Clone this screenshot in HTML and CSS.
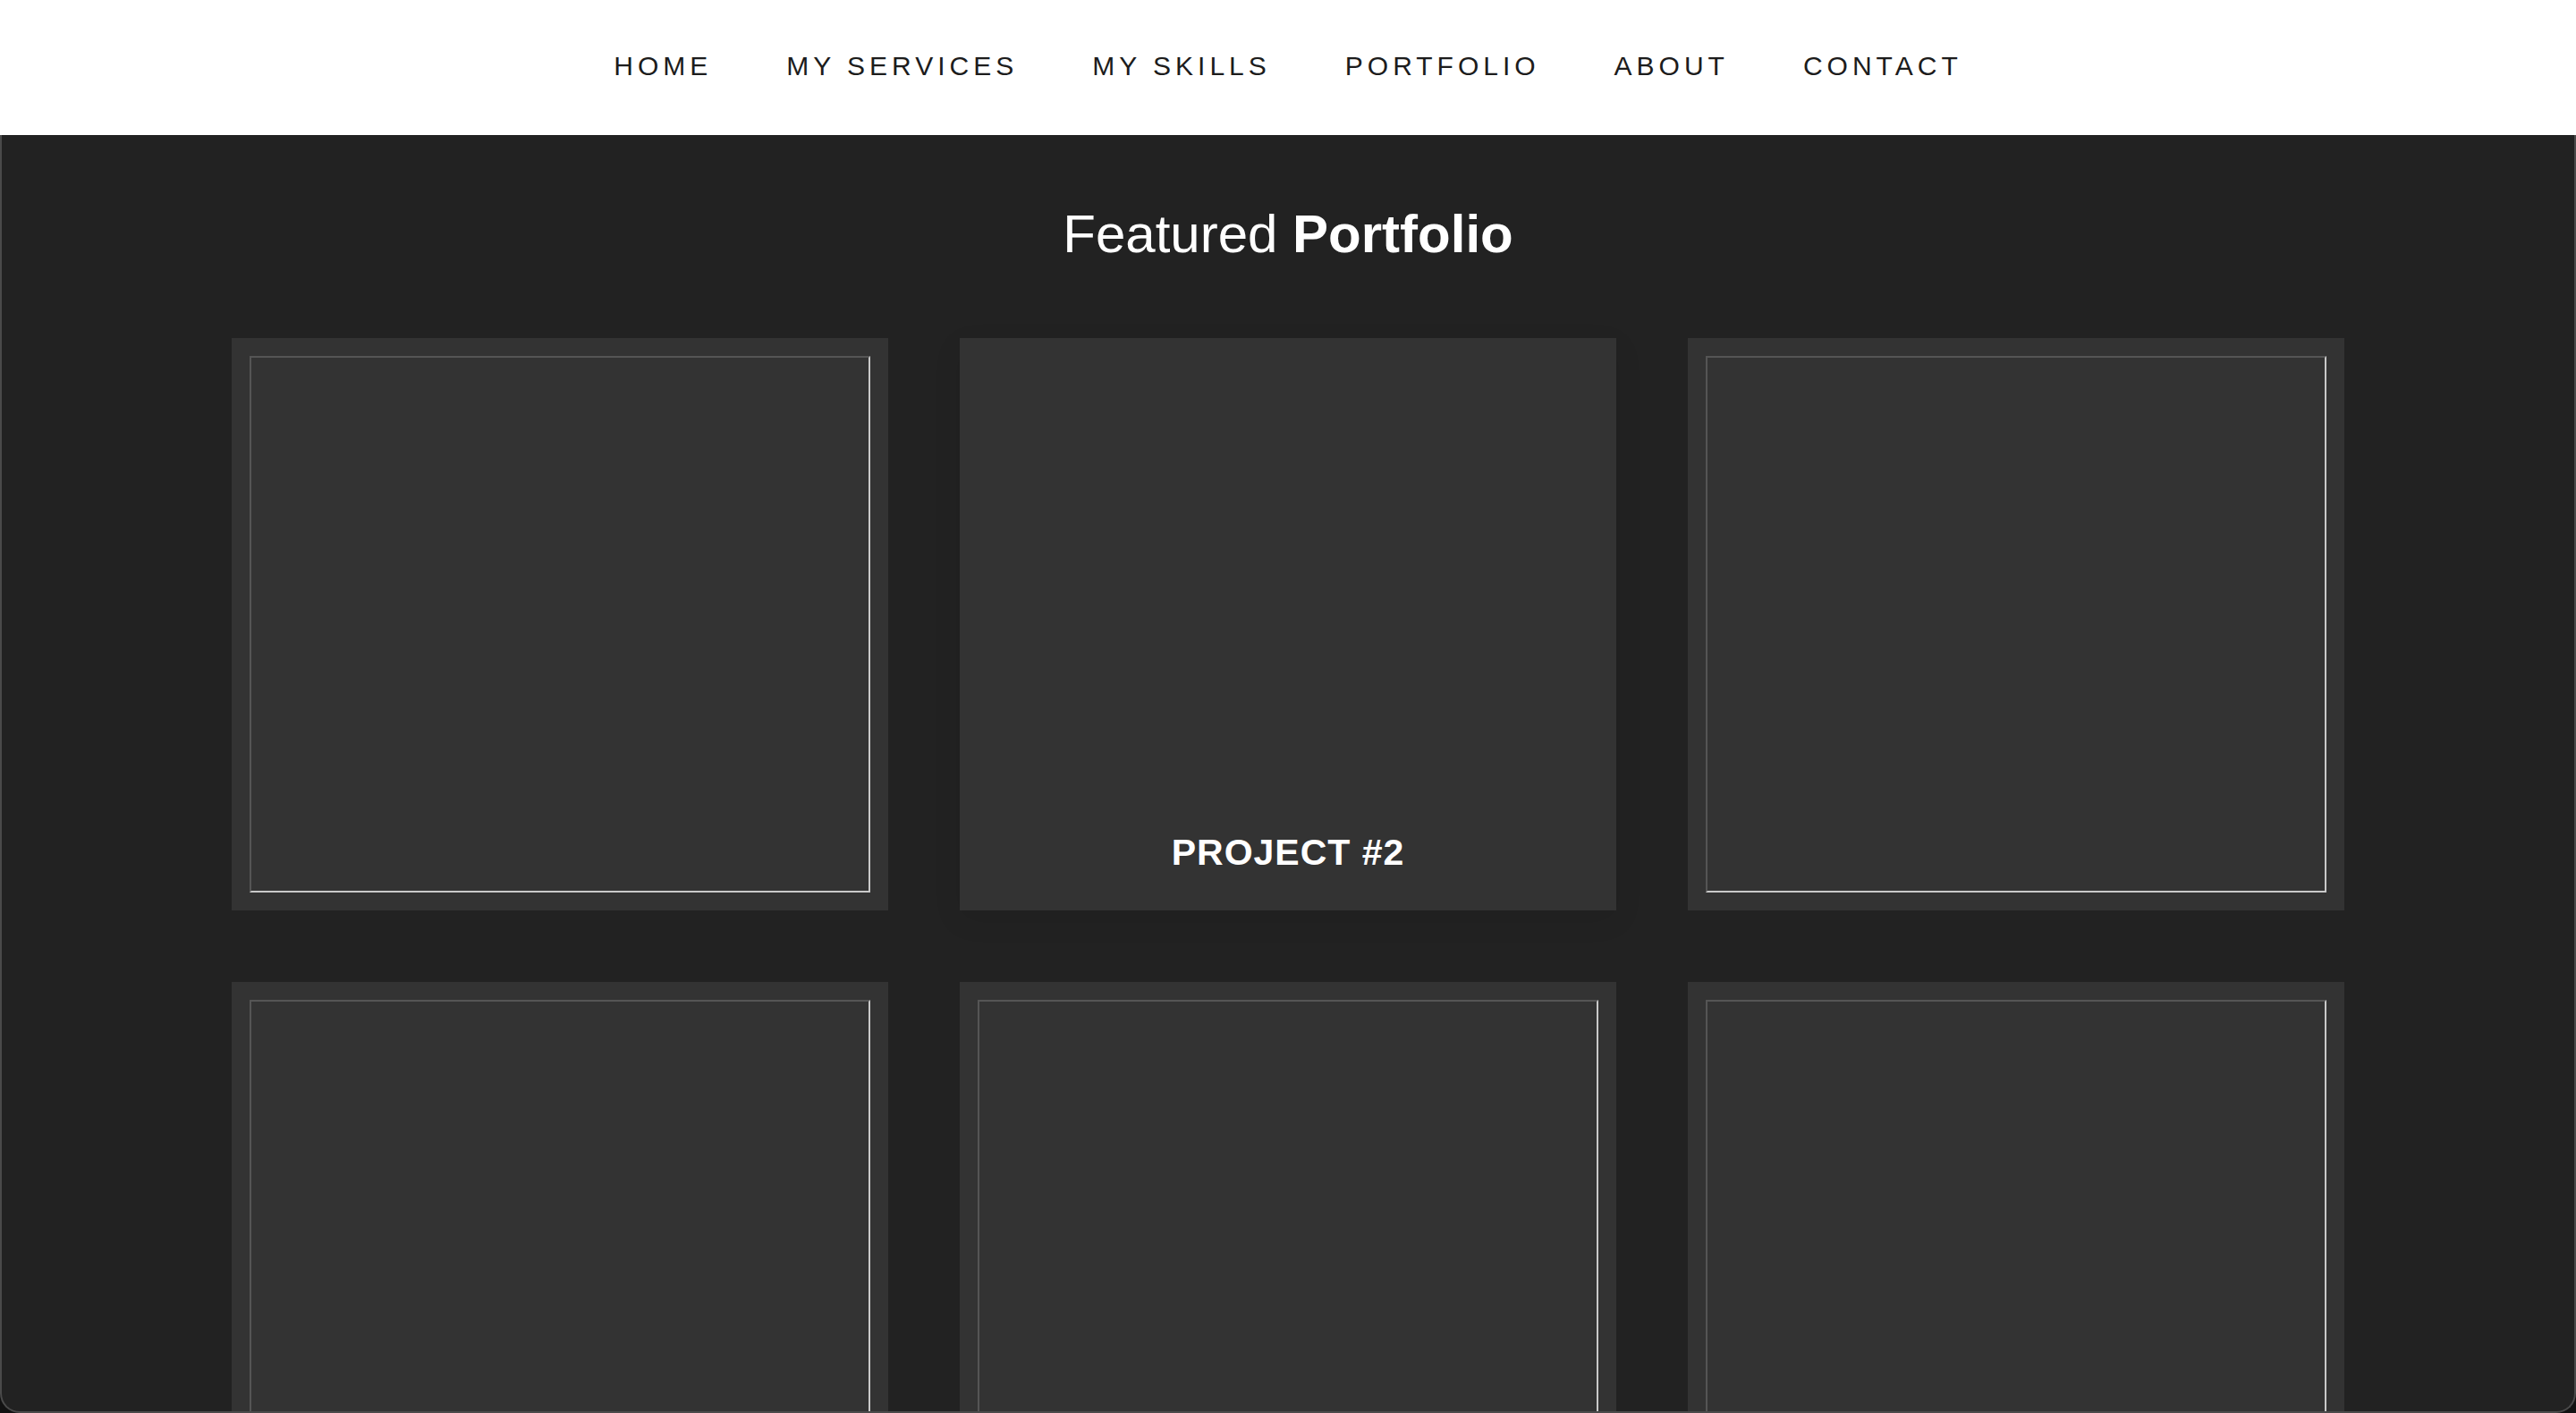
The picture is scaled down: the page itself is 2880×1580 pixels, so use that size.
FILE: index.html
```html
<!DOCTYPE html>
<html lang="en">
  <head>
    <meta charset="UTF-8" />
    <meta name="viewport" content="width=device-width, initial-scale=1.0" />
    <title>Portfolio</title>
    <link rel="stylesheet" href="styles.css">
  </head>
  <body>
    <header id="topbar">
      <nav id="menu">
        <a href="#">HOME</a>
        <a href="#">MY SERVICES</a>
        <a href="#">MY SKILLS</a>
        <a href="#">PORTFOLIO</a>
        <a href="#">ABOUT</a>
        <a href="#">CONTACT</a>
      </nav>
    </header>
    <section id="portfolio">
      <h2 id="portfolio-title"><span class="light">Featured</span> <strong>Portfolio</strong></h2>
      <div id="grid">
        <div class="card"><div class="frame"></div></div>
        <div class="card active"><p class="label">PROJECT #2</p></div>
        <div class="card"><div class="frame"></div></div>
        <div class="card"><div class="frame"></div></div>
        <div class="card"><div class="frame"></div></div>
        <div class="card"><div class="frame"></div></div>
      </div>
    </section>
  </body>
</html>
```

FILE: styles.css
```css
html,
body {
  margin: 0;
  background-color: #121212;
  font-family: "Helvetica Neue", Helvetica, "Liberation Sans", Arial, sans-serif;
}
#topbar {
  height: 151px;
  background-color: white;
  display: flex;
  align-items: center;
  justify-content: center;
}
#menu {
  display: flex;
  gap: 83px;
  margin-top: -3px;
}
#menu a {
  font-size: 30px;
  letter-spacing: 5px;
  color: #1c1c1c;
  text-decoration: none;
}
#portfolio {
  box-sizing: border-box;
  height: 1429px;
  overflow: hidden;
  background-color: #222222;
  border: 2px solid #4a4a4a;
  border-top: none;
  border-radius: 0 0 22px 22px;
  padding-top: 81px;
}
#portfolio-title {
  margin: 0;
  font-size: 60px;
  line-height: 60px;
  font-weight: normal;
  text-align: center;
  color: white;
}
#portfolio-title .light {
  font-weight: 300;
}
#portfolio-title strong {
  font-weight: bold;
}
#grid {
  width: 2362px;
  margin: 86px auto 0;
  display: grid;
  grid-template-columns: repeat(3, 734px);
  grid-auto-rows: 640px;
  gap: 80px;
}
.card {
  background-color: #333333;
  padding: 20px;
  box-sizing: border-box;
  display: flex;
}
.frame {
  flex: 1;
  border: 2px solid;
  border-color: #555555 #c9c9c9 #c9c9c9 #555555;
}
.card.active {
  align-items: flex-end;
  justify-content: center;
  padding-bottom: 44px;
  box-shadow: 0 10px 30px rgba(0, 0, 0, 0.08);
}
.label {
  margin: 0;
  font-size: 41px;
  line-height: 41px;
  font-weight: bold;
  letter-spacing: 1px;
  color: white;
}
```
